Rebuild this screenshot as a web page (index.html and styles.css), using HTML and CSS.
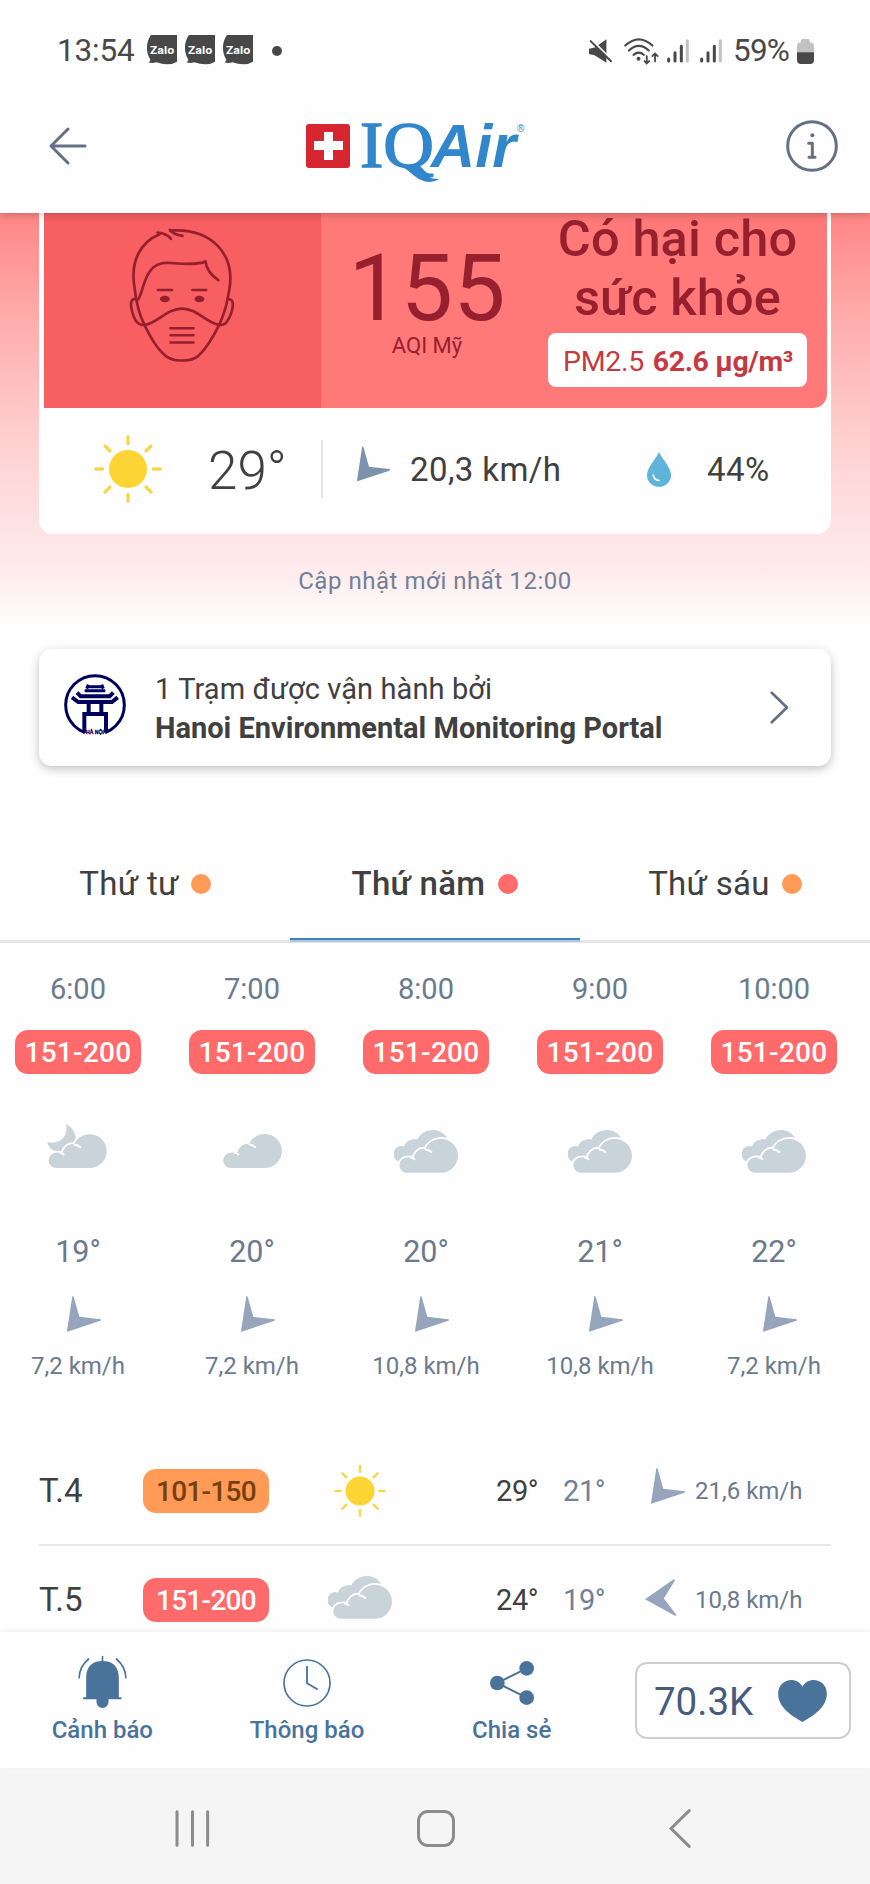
FILE: index.html
```html
<!DOCTYPE html>
<html lang="vi">
<head>
<meta charset="utf-8">
<title>IQAir</title>
<link rel="stylesheet" href="styles.css">
</head>
<body>
<svg class="defs" aria-hidden="true">
  <defs>
    <path id="cloud-shape" d="M23 102H125A51 51 0 0 0 125 0C103 0 85 13 78 30C62 27 47 38 42 58C36 55 29 55 23 56A23 23 0 0 0 23 102Z"/>
    <g id="cloud">
      <use href="#cloud-shape" fill="#c9d3da"/>
      <path d="M76 31Q89 32 98 41M33 56Q43 57 47 63" fill="none" stroke="#fff" stroke-width="6"/>
    </g>
    <symbol id="i-cloud" viewBox="0 0 176 102"><use href="#cloud"/></symbol>
    <symbol id="i-clouds" viewBox="0 0 192 128">
      <path fill="#c9d3da" d="M14 94A23 23 0 0 1 30 49C38 31 53 26 70 28C86 -6 138 -12 160 24L150 80H30Z"/>
      <use href="#cloud-shape" x="16" y="26" fill="#fff" stroke="#fff" stroke-width="11"/>
      <use href="#cloud" x="16" y="26"/>
    </symbol>
    <symbol id="i-moon" viewBox="0 0 180 133">
      <path fill="#c9d3da" d="M57 0C64 34 44 63 0 55C5 69 13 82 34 82L80 78C91 60 94 21 57 0Z"/>
      <use href="#cloud-shape" x="4" y="31" fill="#fff" stroke="#fff" stroke-width="11"/>
      <use href="#cloud" x="4" y="31"/>
    </symbol>
    <symbol id="i-sun" viewBox="0 0 204 204">
      <circle cx="102" cy="102" r="57" fill="#fcd535"/>
      <path fill="none" stroke="#f5d851" stroke-width="10" stroke-linecap="round" d="M102 5V26M102 178V199M5 102H26M178 102H199M33 33L48 48M156 156L171 171M171 33L156 48M48 156L33 171"/>
    </symbol>
    <symbol id="i-wind" viewBox="0 0 102 107"><path d="M16 0Q18 -1 20 2L37 62L100 69Q104 71 100 74L1 107Q0 107 0 105Z"/></symbol>
    <symbol id="i-signal" viewBox="0 0 66 72">
      <path fill="none" stroke="#484848" stroke-width="9" stroke-linecap="round" d="M5 60V66M24 41V66M43 22V66"/>
      <path fill="none" stroke="#c2c2c2" stroke-width="9" stroke-linecap="round" d="M61 5V66"/>
    </symbol>
    <symbol id="i-zalo" viewBox="0 0 90 90">
      <path fill="#484848" d="M12 0H90V80Q66 95 28 82Q16 86 4 82Q12 78 9 72C-5 50-2 18 12 0Z"/>
      <text x="45" y="56" text-anchor="middle" textLength="74" lengthAdjust="spacingAndGlyphs" class="zalo-text">Zalo</text>
    </symbol>
  </defs>
</svg>
<div class="screen">
  <header class="top">
    <div class="status">
      <span class="clock">13:54</span>
      <svg class="zalo"><use href="#i-zalo"/></svg>
      <svg class="zalo"><use href="#i-zalo"/></svg>
      <svg class="zalo"><use href="#i-zalo"/></svg>
      <i class="more"></i>
      <svg class="mute" viewBox="0 0 70 72"><path fill="#484848" d="M0 29L18 25L53 0V72L17 49L0 45Z"/><path d="M2-3L72 67" stroke="#fff" stroke-width="7"/><path d="M5 6L67 67" stroke="#484848" stroke-width="6" stroke-linecap="round"/></svg>
      <svg class="wifi" viewBox="0 0 106 80"><g fill="none" stroke="#484848" stroke-width="6.500" stroke-linecap="round"><path d="M4 22Q45-16 86 22M15 37Q45 9 75 37M29 50Q45 37 60 50"/><path d="M69 54V76M62 69L69 76L76 69M94 70V47M86 54L94 46L102 54" stroke-width="5.500"/></g><circle cx="44" cy="62" r="6" fill="#484848"/></svg>
      <svg class="signal"><use href="#i-signal"/></svg>
      <svg class="signal second"><use href="#i-signal"/></svg>
      <span class="percent">59%</span>
      <svg class="battery" viewBox="0 0 52 76"><path fill="#c2c2c2" d="M12 10V5Q12 0 17 0H34Q39 0 39 5V10Q52 10 52 22V42H0V22Q0 10 12 10Z"/><path fill="#484848" d="M0 40H52V64Q52 76 40 76H12Q0 76 0 64Z"/></svg>
    </div>
    <div class="appbar">
      <svg class="back" viewBox="0 0 114 114"><path fill="none" stroke="#667085" stroke-width="9" stroke-linecap="round" stroke-linejoin="round" d="M108 57H6M57 6L6 57L57 108"/></svg>
      <svg class="logo" viewBox="0 0 230 80">
        <rect x="1" y="14" width="44" height="44" rx="3" fill="#d7262f"/>
        <path fill="#fff" d="M19 22H28V31H38V40H28V50H19V40H9V31H19Z"/>
        <text class="iq" x="55" y="57" textLength="74" lengthAdjust="spacingAndGlyphs">IQ</text>
        <path fill="#3186cc" d="M97 57C105 60 112 72 125 72Q130 72 134 69Q121 69 113 61Q108 55 106 56Z"/>
        <text class="air" x="126" y="57" textLength="85" lengthAdjust="spacingAndGlyphs">Air</text>
        <text class="reg" x="212" y="21.500">®</text>
      </svg>
      <svg class="info" viewBox="0 0 156 156"><circle cx="78" cy="78" r="73" fill="none" stroke="#667085" stroke-width="9"/><circle cx="79" cy="46" r="6" fill="#667085"/><path fill="none" stroke="#667085" stroke-width="9" stroke-linecap="round" stroke-linejoin="round" d="M68 70H79V112M69 112H87"/></svg>
    </div>
  </header>

  <section class="hero">
    <div class="card">
      <div class="aqi">
        <div class="face">
          <svg viewBox="385 75 325 420"><g fill="none" stroke="#961f2e" stroke-width="8" stroke-linecap="round" stroke-linejoin="round">
            <path d="M480 102C425 125 390 180 405 265Q412 330 434 374C452 410 470 445 499 469Q520 484 548 482Q576 484 596 469C625 442 642 410 660 374Q682 325 690 268C708 165 640 83 512 91"/>
            <path d="M474 97C492 99 506 105 514 116M511 89Q522 103 549 107"/>
            <path d="M414 300C434 282 428 188 503 188C535 190 565 195 600 189Q610 188 618 184Q623 218 657 240"/>
            <path d="M411 297C395 295 392 307 395 323Q400 350 409 363Q420 378 439 374C475 368 502 326 548 326C592 326 618 366 656 374Q676 378 684 363Q697 344 700 320C702 304 698 296 685 298"/>
            <path d="M475 270H517M579 270H620M513 385H582M513 406H582M513 428H582"/></g>
            <ellipse cx="496" cy="297" rx="15" ry="10" fill="#961f2e"/><ellipse cx="600" cy="297" rx="15" ry="10" fill="#961f2e"/>
          </svg>
        </div>
        <div class="score"><div class="value">155</div><div class="unit">AQI Mỹ</div></div>
        <div class="level">
          <div class="level-name"><div>Có hại cho</div><div>sức khỏe</div></div>
          <div class="pm"><span>PM2.5</span><b>62.6 µg/m³</b></div>
        </div>
      </div>
      <div class="weather">
        <svg class="sun-big"><use href="#i-sun"/></svg>
        <span class="temp-now">29°</span>
        <i class="divider"></i>
        <svg class="wind wind-now"><use href="#i-wind"/></svg>
        <span class="wind-speed">20,3 km/h</span>
        <svg class="drop" viewBox="0 0 72 104"><path fill="#60b4dc" d="M36 0C50 26 72 46 72 69A36 35 0 0 1 0 69C0 46 22 26 36 0Z"/><path fill="none" stroke="#fff" stroke-width="5" stroke-linecap="round" d="M19 69Q21 83 36 85"/></svg>
        <span class="humidity">44%</span>
      </div>
    </div>
    <div class="updated">Cập nhật mới nhất 12:00</div>
  </section>

  <section class="station">
    <svg class="emblem" viewBox="0 0 186 186"><circle cx="93" cy="93" r="88" fill="none" stroke="#00005f" stroke-width="9"/><path fill="#fff" d="M62 122H124V187H62Z"/><g fill="none" stroke="#00005f" stroke-width="12"><path d="M61 176V120H126V176M74 120V84M112 120V84M39 56L50 67H137L148 56M24 70L43 84H144L161 70"/><path d="M73 32L68 44M113 32L118 44M70 38H116M62 50H124" stroke-width="9"/></g><text x="93" y="181" text-anchor="middle" textLength="54" lengthAdjust="spacingAndGlyphs" class="emblem-text">HÀ NỘI</text></svg>
    <div class="station-text"><div>1 Trạm được vận hành bởi</div><b>Hanoi Environmental Monitoring Portal</b></div>
    <svg class="chevron" viewBox="0 0 56 98"><path fill="none" stroke="#667085" stroke-width="8" stroke-linecap="round" stroke-linejoin="round" d="M5 5L50 49L5 93"/></svg>
  </section>

  <nav class="tabs">
    <div class="tab"><span>Thứ tư</span><i class="dot orange"></i></div>
    <div class="tab active"><span>Thứ năm</span><i class="dot red"></i></div>
    <div class="tab"><span>Thứ sáu</span><i class="dot orange"></i></div>
  </nav>

  <section class="hours">
    <div class="hour"><span class="time">6:00</span><span class="pill red">151-200</span><div class="sky"><svg class="moon"><use href="#i-moon"/></svg></div><span class="temp">19°</span><svg class="wind"><use href="#i-wind"/></svg><span class="speed">7,2 km/h</span></div>
    <div class="hour"><span class="time">7:00</span><span class="pill red">151-200</span><div class="sky"><svg class="cloud"><use href="#i-cloud"/></svg></div><span class="temp">20°</span><svg class="wind"><use href="#i-wind"/></svg><span class="speed">7,2 km/h</span></div>
    <div class="hour"><span class="time">8:00</span><span class="pill red">151-200</span><div class="sky"><svg class="clouds"><use href="#i-clouds"/></svg></div><span class="temp">20°</span><svg class="wind"><use href="#i-wind"/></svg><span class="speed">10,8 km/h</span></div>
    <div class="hour"><span class="time">9:00</span><span class="pill red">151-200</span><div class="sky"><svg class="clouds"><use href="#i-clouds"/></svg></div><span class="temp">21°</span><svg class="wind"><use href="#i-wind"/></svg><span class="speed">10,8 km/h</span></div>
    <div class="hour"><span class="time">10:00</span><span class="pill red">151-200</span><div class="sky"><svg class="clouds"><use href="#i-clouds"/></svg></div><span class="temp">22°</span><svg class="wind"><use href="#i-wind"/></svg><span class="speed">7,2 km/h</span></div>
  </section>

  <section class="days">
    <div class="day"><span class="day-name">T.4</span><span class="pill orange">101-150</span><svg class="sun"><use href="#i-sun"/></svg><span class="high">29°</span><span class="low">21°</span><svg class="wind"><use href="#i-wind"/></svg><span class="speed">21,6 km/h</span></div>
    <div class="day"><span class="day-name">T.5</span><span class="pill red">151-200</span><svg class="clouds"><use href="#i-clouds"/></svg><span class="high">24°</span><span class="low">19°</span><svg class="wind west" viewBox="0 0 97 112"><path d="M0 61L87 1Q92 1 90 5L57 59L95 108Q96 112 91 111Z"/></svg><span class="speed">10,8 km/h</span></div>
  </section>

  <footer class="actions">
    <div class="action"><svg class="bell" viewBox="0 0 146 156"><path fill="#4a739c" d="M24 124V66C24 28 46 15 73 15S122 28 122 66V124H129Q133 127 129 130H91V138A18 18 0 0 1 55 138V130H16Q12 127 16 124Z"/><path fill="none" stroke="#4a739c" stroke-width="5" stroke-linecap="round" d="M73 2V20M31 9Q4 32 3 65M115 9Q142 32 143 65"/></svg><span>Cảnh báo</span></div>
    <div class="action"><svg class="watch" viewBox="0 0 144 144"><g fill="none" stroke="#4a739c" stroke-width="5" stroke-linecap="round"><circle cx="72" cy="72" r="69"/><path d="M72 23V73L102 90" stroke-width="5.500"/></g></svg><span>Thông báo</span></div>
    <div class="action"><svg class="share" viewBox="0 0 132 132"><path fill="none" stroke="#4a739c" stroke-width="6" d="M110 22L22 66L110 110"/><g fill="#4a739c"><circle cx="110" cy="22" r="22"/><circle cx="22" cy="66" r="22"/><circle cx="110" cy="110" r="22"/></g></svg><span>Chia sẻ</span></div>
    <div class="likes"><span>70.3K</span><svg class="heart" viewBox="0 0 146 126"><path fill="#4a739c" d="M73 126C45 109 0 84 0 41C0-2 54-14 73 20C92-14 146-2 146 41C146 84 101 109 73 126Z"/></svg></div>
  </footer>

  <div class="sysnav">
    <svg class="recents" viewBox="0 0 104 110"><path stroke="#8c8c8c" stroke-width="9" stroke-linecap="round" d="M6 5V105M52 5V105M97 5V105"/></svg>
    <i class="home"></i>
    <svg class="sysback" viewBox="0 0 66 118"><path fill="none" stroke="#8c8c8c" stroke-width="9" stroke-linecap="round" d="M61 5L6 59L61 113"/></svg>
  </div>
</div>
</body>
</html>
```
FILE: styles.css
```css
* { box-sizing: border-box; }
body { margin: 0; background: #fff; font-family: Roboto, "Noto Sans", sans-serif; color: #404040; }
svg { display: block; flex: none; overflow: visible; }
i { display: block; flex: none; }
.defs { position: absolute; width: 0; height: 0; }
.screen { width: 870px; height: 1884px; overflow: hidden; display: flex; flex-direction: column; background: #fefefe; }

.top { position: relative; z-index: 2; flex: none; height: 213px; background: #fefefe; box-shadow: 0 2px 8px rgba(0,0,0,.2); }
.status { display: flex; align-items: center; height: 100px; padding: 2px 0 0 57px; font-size: 31.5px; line-height: 40px; color: #484848; }
.clock { width: 90px; letter-spacing: -.2px; }
.zalo { width: 30px; height: 30px; margin-right: 8px; margin-top: -3px; }
.zalo-text { font: 700 33px Inter, sans-serif; fill: #fff; }
.more { width: 10px; height: 10px; border-radius: 50%; background: #484848; margin-left: 11px; }
.mute { width: 23px; height: 24px; margin-left: 307px; }
.wifi { width: 35px; height: 27px; margin-left: 12px; }
.signal { width: 22px; height: 24px; margin-left: 8px; }
.signal.second { margin-left: 11px; }
.percent { width: 63px; padding-left: 11px; white-space: nowrap; letter-spacing: -.8px; }
.battery { width: 17px; height: 25px; margin-left: 12px; }
.appbar { display: flex; align-items: center; height: 91px; padding-left: 49px; }
.back { width: 38px; height: 38px; }
.logo { width: 230px; height: 80px; margin-left: 218px; margin-top: 9px; }
.iq { font: 65px "Liberation Serif", serif; fill: #3186cc; stroke: #3186cc; stroke-width: 1.5px; }
.air { font: italic 700 62px "Liberation Sans", sans-serif; fill: #3186cc; }
.reg { font: 10px "Liberation Sans", sans-serif; fill: #3186cc; }
.info { width: 52px; height: 52px; margin-left: 251px; }

.hero { flex: none; height: 412px; padding: 0 39px; background: linear-gradient(#ff8585 0%, #ffabab 25%, #ffd0d0 55%, #fee6e7 80%, #feebec 87%, #fefefe 100%); }
.card { height: 321px; padding: 0 4px 0 5px; border-radius: 0 0 14px 14px; background: #fefefe; }
.aqi { display: flex; height: 195px; border-radius: 0 0 14px 0; overflow: hidden; background: #ff7979; color: #96202e; }
.face { flex: none; width: 277px; background: #f75f61; padding: 12px 0 0 84px; }
.face svg { width: 108px; height: 140px; }
.score { flex: none; width: 212px; padding-top: 36px; text-align: center; }
.value { font-size: 93px; line-height: 80px; }
.unit { font-size: 22px; line-height: 26px; margin-top: 4px; }
.level { flex: 1; display: flex; flex-direction: column; align-items: center; padding-right: 5px; }
.level-name { display: grid; gap: 8px; font-size: 50.5px; line-height: 51px; font-weight: 500; letter-spacing: .15px; text-align: center; white-space: nowrap; }
.pm { display: flex; justify-content: space-between; align-items: center; width: 259px; height: 54px; margin-top: 10px; padding: 2px 14px 0 15px; border-radius: 8px; background: #fff; color: #c53a42; font-size: 28.5px; white-space: nowrap; }
.pm span { letter-spacing: -.3px; }
.pm b { letter-spacing: -.4px; }
.weather { display: flex; align-items: center; height: 122px; padding-left: 50px; }
.sun-big { width: 68px; height: 68px; }
.temp-now { width: 113px; margin-left: 46px; padding-top: 3px; font-size: 53px; font-weight: 300; line-height: 62px; }
.divider { width: 2px; height: 58px; background: #e2e4e6; }
.wind { width: 34px; height: 36px; fill: #96a5bc; }
.wind-now { width: 33px; fill: #7c92ad; margin: -10px 0 0 34px; }
.wind-speed { width: 170px; margin-left: 20px; font-size: 33px; white-space: nowrap; letter-spacing: .4px; }
.drop { width: 24px; height: 35px; margin-left: 67px; }
.humidity { margin-left: 36px; font-size: 33px; letter-spacing: .4px; }
.updated { margin-top: 32px; line-height: 30px; font-size: 24px; letter-spacing: .55px; text-align: center; color: #718096; }

.station { flex: none; display: flex; align-items: center; width: 792px; height: 117px; margin: 24px 0 0 39px; border-radius: 13px; background: #fff; box-shadow: 0 3px 10px rgba(0,0,0,.24); }
.emblem { width: 62px; height: 62px; margin: -5px 0 0 25px; }
.emblem-text { font: 700 18px "Liberation Sans", sans-serif; fill: #00005f; stroke: #00005f; stroke-width: 1px; }
.station-text { width: 594px; margin-left: 29px; padding-top: 3px; font-size: 29px; line-height: 39px; white-space: nowrap; }
.station-text div { letter-spacing: .1px; }
.chevron { width: 19px; height: 33px; margin-left: 21px; }

.tabs { flex: none; display: flex; height: 117px; margin-top: 60px; border-bottom: 3px solid #e6e6e6; font-size: 33px; }
.tab { flex: 1; display: flex; align-items: center; justify-content: center; height: 117px; padding-bottom: 2px; letter-spacing: .3px; }
.tab span { white-space: nowrap; }
.tab.active { font-weight: 500; background: linear-gradient(#4482b8, #4482b8) 0 112px / 100% 2px no-repeat, linear-gradient(#acc8e6, #acc8e6) 0 114px / 100% 2px no-repeat; }
.dot { width: 20px; height: 20px; border-radius: 50%; margin-left: 12px; }
.active .dot { margin-left: 13px; }
.orange { background: #ff9b57; }
.red { background: #ff6a6a; }

.hours { flex: none; display: grid; grid-template-columns: repeat(5, 174px); width: 870px; height: 494px; margin-left: -9px; color: #6b7a8d; }
.hour { display: flex; flex-direction: column; align-items: center; }
.time { margin-top: 26px; line-height: 40px; font-size: 29px; }
.pill { width: 126px; height: 44px; border-radius: 13px; font-size: 28px; font-weight: 500; line-height: 46px; text-align: center; color: #fff; }
.pill.orange { color: #75400f; }
.hour .pill { margin-top: 21px; letter-spacing: .3px; }
.sky { display: flex; align-items: flex-end; justify-content: center; width: 100%; height: 94px; }
.moon { width: 60px; height: 44px; margin-right: 2px; }
.cloud { width: 59px; height: 34px; }
.clouds { width: 64px; height: 43px; }
.sky .clouds { margin-bottom: -5px; }
.hour .temp { margin-top: 64px; line-height: 40px; font-size: 30.5px; }
.hour .wind { margin: 24px 0 0 12px; }
.speed { line-height: 30px; font-size: 24px; white-space: nowrap; }
.hour .speed { margin-top: 19px; }

.days { flex: none; height: 195px; padding: 0 39px; overflow: hidden; }
.day { display: grid; grid-template-columns: 104px 126px 182px 113px 80px 52px 140px; align-items: center; height: 109px; border-bottom: 2px solid #e8e8e8; }
.day-name { font-size: 33px; letter-spacing: .1px; }
.day .pill { letter-spacing: -.7px; }
.sun { width: 52px; height: 52px; justify-self: center; }
.day .clouds { justify-self: center; margin-top: -5px; }
.high { padding-left: 45px; font-size: 29px; letter-spacing: -.4px; }
.low { padding-left: 0; margin-left: -1px; font-size: 29px; letter-spacing: -.4px; color: #718096; }
.day .wind { margin: -10px 0 0 7px; }
.day .wind.west { width: 32px; height: 37px; margin: -4px 0 0 1px; }
.day .speed { margin-left: -1px; color: #6b7a8d; }

.actions { position: relative; flex: none; display: grid; grid-template-columns: repeat(3, 204.67px) 216px; height: 136px; background: #fefefe; box-shadow: 0 -2px 6px rgba(0,0,0,.05); }
.action { display: flex; flex-direction: column; align-items: center; justify-content: flex-end; color: #4a739c; font-size: 24px; font-weight: 500; padding-bottom: 22px; line-height: 32px; }
.bell { width: 49px; height: 52px; margin-bottom: 6px; }
.watch { width: 48px; height: 48px; margin-bottom: 7px; }
.share { width: 44px; height: 44px; margin-bottom: 9px; }
.likes { display: flex; align-items: center; justify-content: space-between; width: 216px; height: 77px; margin: 30px 0 0 21px; padding: 1px 22px 0 17px; border: 2px solid #cfcfcf; border-radius: 12px; color: #465c7c; font-size: 38.5px; }
.heart { width: 49px; height: 42px; }

.sysnav { flex: none; display: flex; align-items: center; height: 116px; padding: 7px 0 3px 175px; background: #f5f5f5; }
.recents { width: 35px; height: 37px; }
.home { width: 38px; height: 37px; margin-left: 207px; border: 3px solid #8c8c8c; border-radius: 11px; }
.sysback { width: 22px; height: 39px; margin-left: 214px; }
```
